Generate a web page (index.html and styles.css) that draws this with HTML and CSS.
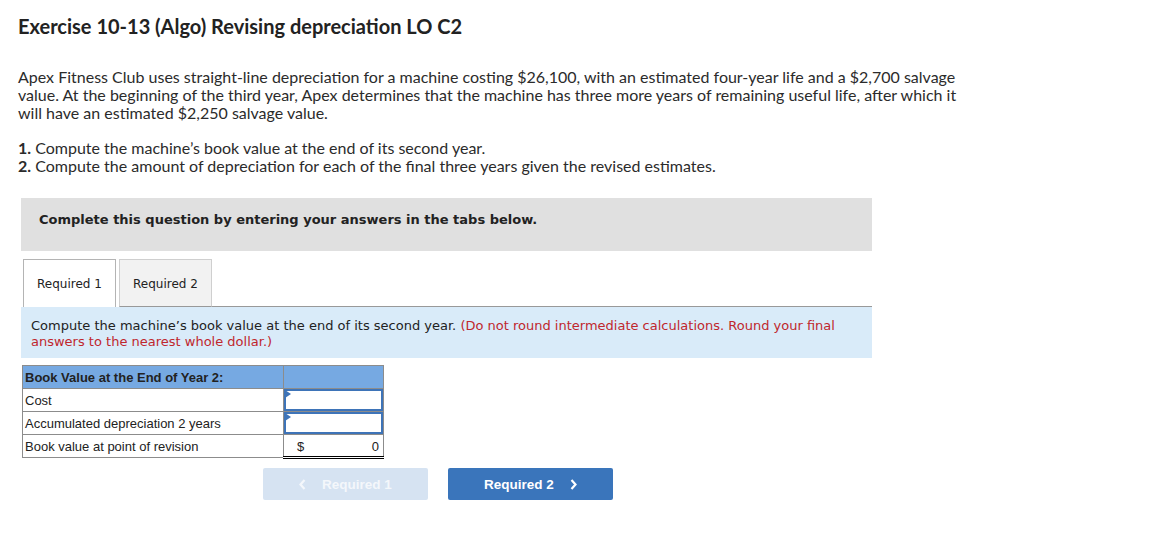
FILE: index.html
```html
<!DOCTYPE html>
<html>
<head>
<meta charset="utf-8">
<link rel="stylesheet" href="styles.css">
</head>
<body>
<div class="page">
  <h1 class="title">Exercise 10-13 (Algo) Revising depreciation LO C2</h1>
  <p class="intro">Apex Fitness Club uses straight-line depreciation for a machine costing $26,100, with an estimated four-year life and a $2,700 salvage value. At the beginning of the third year, Apex determines that the machine has three more years of remaining useful life, after which it will have an estimated $2,250 salvage value.</p>
  <div class="reqs">
    <div><b>1.</b> Compute the machine’s book value at the end of its second year.</div>
    <div><b>2.</b> Compute the amount of depreciation for each of the final three years given the revised estimates.</div>
  </div>
  <div class="notice">Complete this question by entering your answers in the tabs below.</div>
  <div class="tabs">
    <div class="tab active">Required 1</div>
    <div class="tab">Required 2</div>
    <div class="tab-fill"></div>
  </div>
  <div class="instr">Compute the machine’s book value at the end of its second year. <span class="red">(Do not round intermediate calculations. Round your final answers to the nearest whole dollar.)</span></div>
  <table class="grid">
    <tr class="head"><td class="lbl">Book Value at the End of Year 2:</td><td class="val"></td></tr>
    <tr><td class="lbl">Cost</td><td class="val input"><span class="flag"></span></td></tr>
    <tr><td class="lbl">Accumulated depreciation 2 years</td><td class="val input"><span class="flag"></span></td></tr>
    <tr><td class="lbl">Book value at point of revision</td><td class="val total"><span class="cur">$</span><span class="num">0</span></td></tr>
  </table>
  <div class="nav">
    <div class="btn disabled"><svg class="chev" width="7" height="11" viewBox="0 0 7 11"><polyline points="5.5,1 1.5,5.5 5.5,10" fill="none" stroke="currentColor" stroke-width="2.2"/></svg>Required 1</div>
    <div class="btn primary">Required 2<svg class="chev right" width="7" height="11" viewBox="0 0 7 11"><polyline points="1.5,1 5.5,5.5 1.5,10" fill="none" stroke="currentColor" stroke-width="2.2"/></svg></div>
  </div>
</div>
</body>
</html>
```

FILE: styles.css
```css
html, body { margin: 0; padding: 0; background: #fff; }
.page { padding-left: 18px; font-family: "Lato", "Liberation Sans", sans-serif; color: #2b2b2b; }
.title { margin: 14px 0 0 0; font-size: 20px; line-height: 24px; font-weight: 700; color: #222; }
.intro { margin: 30px 0 0 0; font-size: 16px; line-height: 18px; width: 950px; }
.reqs { margin-top: 17px; font-size: 16px; line-height: 18px; }
.reqs b { font-weight: 700; }
.notice { margin: 23px 0 0 3px; width: 833px; height: 39px; padding: 14px 0 0 18px; background: #e0e0e0;
  font-family: "DejaVu Sans", Verdana, sans-serif; font-weight: 700; font-size: 13px; line-height: 16px; color: #222; }
.tabs { display: flex; margin: 8px 0 0 3px; width: 851px; height: 48px; }
.tab { box-sizing: border-box; width: 93px; height: 48px; padding-top: 16px; text-align: center; font-family: "DejaVu Sans", Verdana, sans-serif; font-size: 12px; line-height: 16px; color: #222; }
.tab.active { margin-left: 2px; background: #fff; border: 1px solid #b4b4b4; border-bottom: none; }
.tab:not(.active) { margin-left: 3px; background: #f2f2f2; border: 1px solid #cfcfcf; border-bottom: 1px solid #999; }
.tab-fill { flex: 1; border-bottom: 1px solid #999; }
.instr { margin-left: 3px; width: 841px; height: 40px; padding: 11px 0 0 10px; background: #d9ebf9;
  font-family: "DejaVu Sans", Verdana, sans-serif; font-size: 13px; line-height: 16px; color: #222; }
.red { color: #c0272d; }
.grid { margin: 7px 0 0 4px; border-collapse: collapse; font-family: "Liberation Sans", Arial, sans-serif; font-size: 13px; color: #222; }
.grid td { height: 23px; padding: 0; border: 1px solid #8c8c8c; box-sizing: border-box; }
.grid .lbl { width: 261px; padding-left: 2px; }
.grid .val { width: 100px; position: relative; }
.grid .head td { background: #76a9e2; font-weight: 700; }
.grid .input { background: #fff; box-shadow: inset 0 0 0 2px #3e74b8; }
.flag { position: absolute; left: 1px; top: 1px; width: 0; height: 0; border-top: 4px solid transparent; border-bottom: 4px solid transparent; border-left: 6px solid #3e74b8; }
.grid .total { border-top: 1px solid #000; border-bottom: 3px double #000; }
.cur { position: absolute; left: 13px; top: 4px; }
.num { position: absolute; right: 4px; top: 4px; }
.nav { display: flex; gap: 20px; margin: 9px 0 0 245px; }
.btn { width: 165px; height: 32px; border-radius: 2px; display: flex; align-items: center; justify-content: center;
  font-family: "Liberation Sans", Arial, sans-serif; font-weight: 700; font-size: 13.5px; color: #fff; }
.btn.disabled { background: #d6e3f2; color: #f4f7fb; }
.btn.primary { background: #3a75bb; }
.chev { margin-right: 16px; }
.chev.right { margin-right: 0; margin-left: 16px; }
```
